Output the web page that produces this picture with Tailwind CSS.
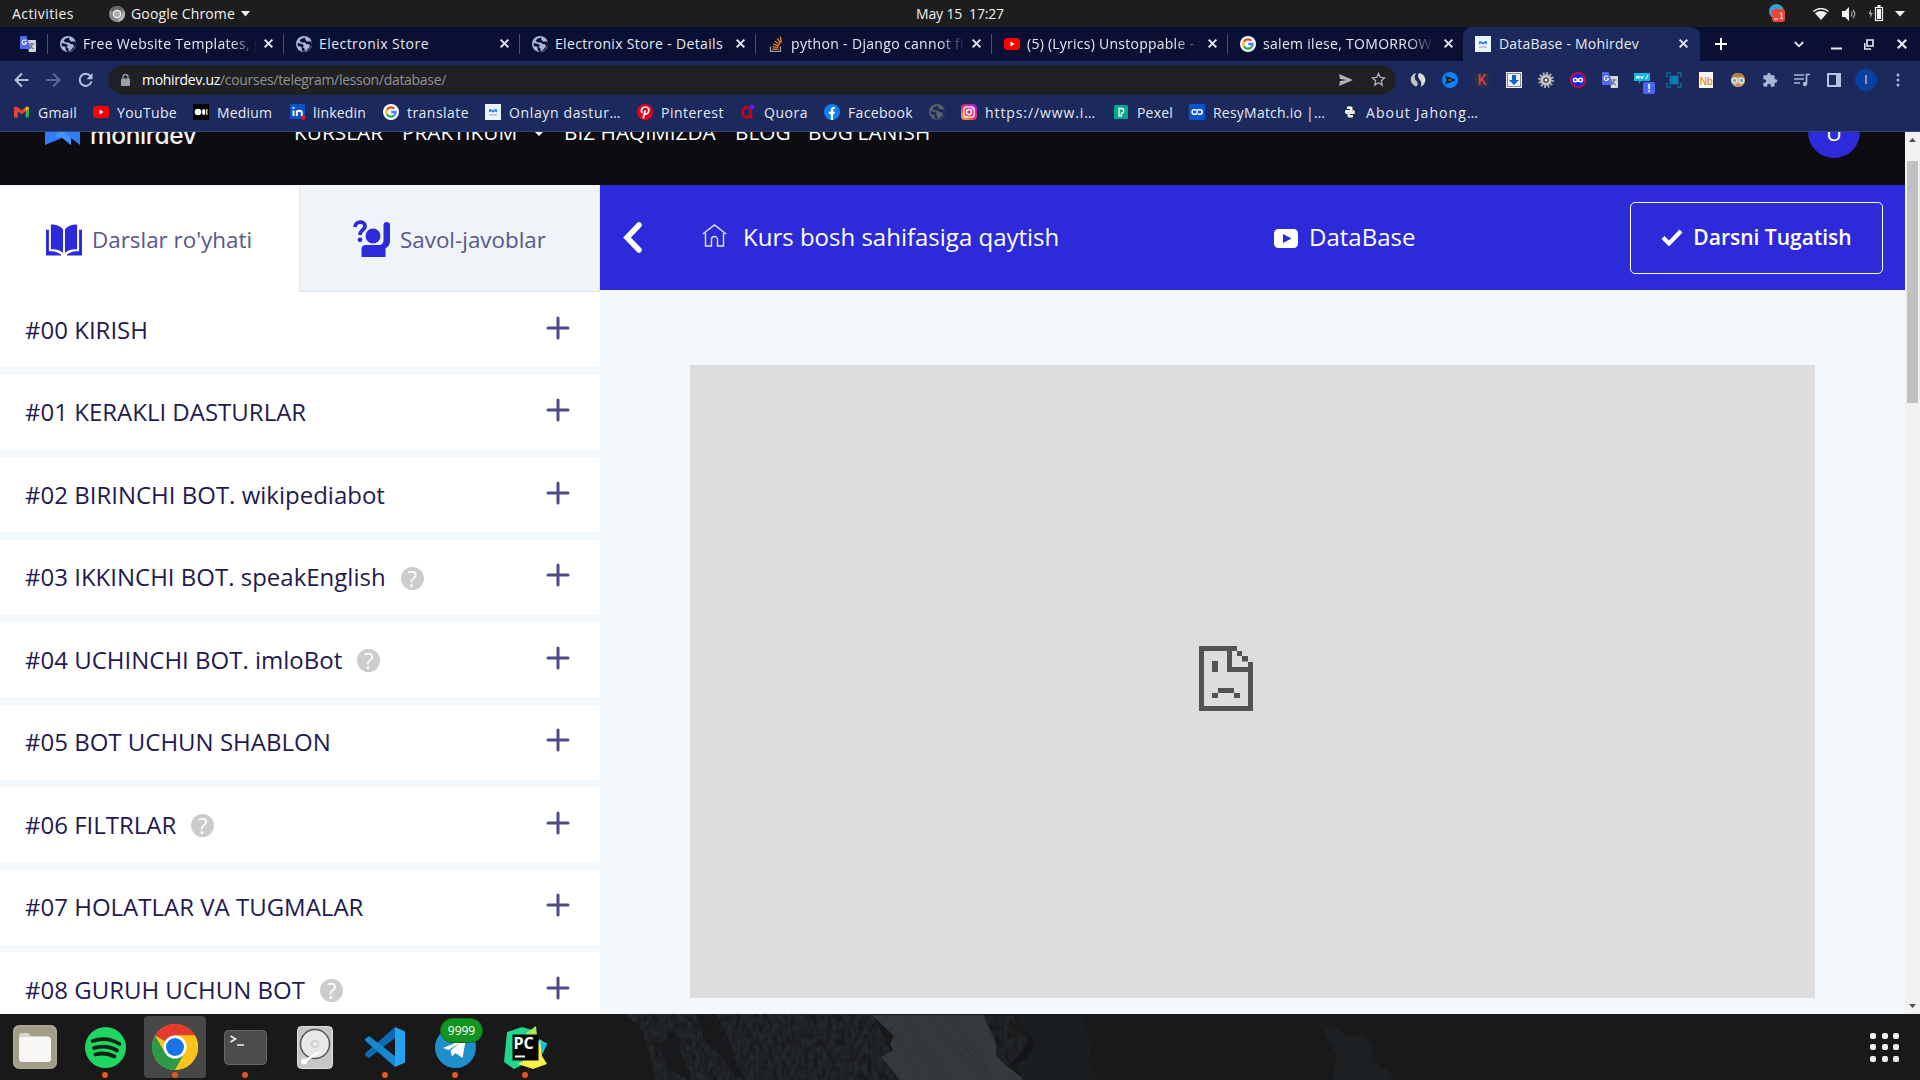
<!DOCTYPE html>
<html lang="uz">
<head>
<meta charset="utf-8">
<title>DataBase - Mohirdev</title>
<script src="https://cdn.jsdelivr.net/npm/@tailwindcss/browser@4"></script>
</head>
<body class="w-[1920px] h-[1080px] overflow-hidden bg-[#191919] font-['Open_Sans',sans-serif] flex flex-col">

<!-- Shared icons -->
<svg class="hidden">
  <symbol id="globe" viewBox="0 0 16 16"><circle cx="8" cy="8" r="8" fill="currentColor"/><path d="M9 1.500 5 3 3.500 5 6 6.500h3L10.500 8l3 .5.5 2-3.500 4-2 .5V12.500L6.500 11 8 9.500 6 8 1.500 7 2 10.500 4 10l2 2-.5 2L8 16l5-2 3-5-.5-3.500L11 5.500 9.500 4z" fill="var(--land,#0a1033)"/></symbol>
  <symbol id="x" viewBox="0 0 10 10"><path d="M1.500 1.500l7 7m0-7l-7 7" stroke="currentColor" stroke-width="1.800"/></symbol>
  <symbol id="yt" viewBox="0 0 16 16"><rect x="0" y="2" width="16" height="12" rx="3" fill="#f00"/><path d="M6.500 5.500v5l4-2.500z" fill="#fff"/></symbol>
  <symbol id="google" viewBox="0 0 16 16"><circle cx="8" cy="8" r="8" fill="#fff"/><g fill="none" stroke-width="2.300"><path d="M11.300 4.700A4.700 4.700 0 0 0 3.900 5.800" stroke="#ea4335"/><path d="M3.900 5.800a4.700 4.700 0 0 0 0 4.400" stroke="#fbbc05"/><path d="M3.900 10.200a4.700 4.700 0 0 0 7 1.400" stroke="#34a853"/><path d="M10.900 11.600A4.700 4.700 0 0 0 12.600 8H8.200" stroke="#4285f4"/></g></symbol>
  <symbol id="mohir" viewBox="0 0 16 16"><rect width="16" height="16" fill="#eaf4ff"/><path d="M4 8.500V6Q4 4.500 6 5.200L8 6.500l2-1.300Q12 4.500 12 6v2.500l-2-1.300-2 1.300-2-1.300z" fill="#2f7df6"/><path d="M4 11h8" stroke="#a5b0c4" stroke-width="1.300"/></symbol>
  <symbol id="gtrans" viewBox="0 0 16 16"><path d="M7 4h8a1 1 0 0 1 1 1v10a1 1 0 0 1-1 1H9z" fill="#d6d8dc"/><path d="M9.500 8h5M12 7v1.500c0 2-1 3-2 4m.5-3c.8 2 2 2.800 3.500 3.500" stroke="#5b6270" fill="none"/><path d="M1 0h5.500L11 13H1a1 1 0 0 1-1-1V1a1 1 0 0 1 1-1z" fill="#5468e8"/><path d="M6.200 5A2.200 2.200 0 1 0 6.500 6.800H4.500" stroke="#fff" fill="none" stroke-width="1.100"/></symbol>
  <symbol id="plus" viewBox="0 0 24 24"><path d="M12 2v20M2 12h20" stroke="#4b4b85" stroke-width="3" stroke-linecap="round"/></symbol>
</svg>

<!-- System bar -->
<header class="h-[27px] shrink-0 bg-[#1d1d1d] text-[#f0f0f0] text-[14px] grid grid-cols-3 items-center">
  <div class="flex items-center pl-3">
    <span class="w-[97px] tracking-[0.43px]">Activities</span>
    <svg class="size-4" viewBox="0 0 16 16"><circle cx="8" cy="8" r="8" fill="#8b8b8b"/><path d="M8 0a8 8 0 0 1 7 4H8a4 4 0 0 0-4 2L1.500 3.500A8 8 0 0 1 8 0z" fill="#666"/><path d="M15.500 5A8 8 0 0 1 8 16l4-6z" fill="#b5b5b5"/><circle cx="8" cy="8" r="3.600" fill="#aaa" stroke="#f2f2f2" stroke-width="1.200"/></svg>
    <span class="pl-[6px] tracking-[0.150px]">Google Chrome</span>
    <svg class="w-[9px] h-[6px] ml-[6px]" viewBox="0 0 9 6"><path d="M0 0h9L4.500 5.500z" fill="#f0f0f0"/></svg>
  </div>
  <div class="text-center whitespace-pre tracking-[-0.160px]">May 15  17:27</div>
  <div class="flex items-center justify-end pr-[15px]">
    <svg class="w-[17px] h-[19px] mr-[27px]" viewBox="0 0 17 19"><circle cx="7.500" cy="7.500" r="7.500" fill="#2ea3dc"/><rect x="3" y="5" width="13" height="13" rx="3" fill="#f0443a"/><path d="M5 15h4M11 14.500h3M12.700 15V9l-1.700 1" stroke="#fff" fill="none"/></svg>
    <svg class="w-4 h-3 mr-3" viewBox="0 0 16 12"><path d="M.5 3.500C5-.5 11-.5 15.500 3.500" stroke="#f2f2f2" stroke-width="1.300" fill="none"/><path d="M2 5.200c4-3 8-3 12 0L8 12z" fill="#f2f2f2"/></svg>
    <svg class="w-4 h-4 mr-[11px]" viewBox="0 0 16 16"><path d="M1 5h3l4-4v14l-4-4H1z" fill="#f2f2f2"/><path d="M10 5.500q2 2.500 0 5M12 4q3.500 4 0 8" stroke="#aaa" fill="none" stroke-width="1.200"/></svg>
    <svg class="w-4 h-[17px] mr-[11px]" viewBox="0 0 16 17"><path d="M3 4 .5 9h2L2 13l3-5H3z" fill="#aaa"/><rect x="7.500" y="2.500" width="7" height="13" fill="none" stroke="#f2f2f2" stroke-width="1.200"/><rect x="9" y="4" width="4" height="10" fill="#f2f2f2"/><rect x="9.500" y="0" width="3" height="2" fill="#f2f2f2"/></svg>
    <svg class="w-[10px] h-[6px]" viewBox="0 0 10 6"><path d="M0 0h10L5 5.500z" fill="#f2f2f2"/></svg>
  </div>
</header>

<!-- Browser tabs -->
<div class="h-[34px] shrink-0 bg-[#0a1033] flex items-center text-[14px] text-[#e6e9f2] whitespace-nowrap">
  <div class="w-[47px] pl-5"><svg class="size-4"><use href="#gtrans"/></svg></div>
  <div class="w-[236px] h-5 border-l border-[#4c526b] flex items-center pl-3 pr-[9px] pb-[1px]">
    <svg class="size-4 shrink-0 text-[#a9b6d8]"><use href="#globe"/></svg>
    <span class="ml-[7px] w-[174px] overflow-hidden tracking-[0.300px] mask-r-from-85%">Free Website Templates, p</span>
    <svg class="size-[11px] ml-auto shrink-0"><use href="#x"/></svg>
  </div>
  <div class="w-[236px] h-5 border-l border-[#4c526b] flex items-center pl-3 pr-[9px] pb-[1px]">
    <svg class="size-4 shrink-0 text-[#a9b6d8]"><use href="#globe"/></svg>
    <span class="ml-[7px] tracking-[0.450px]">Electronix Store</span>
    <svg class="size-[11px] ml-auto shrink-0"><use href="#x"/></svg>
  </div>
  <div class="w-[236px] h-5 border-l border-[#4c526b] flex items-center pl-3 pr-[9px] pb-[1px]">
    <svg class="size-4 shrink-0 text-[#a9b6d8]"><use href="#globe"/></svg>
    <span class="ml-[7px] tracking-[0.340px]">Electronix Store - Details</span>
    <svg class="size-[11px] ml-auto shrink-0"><use href="#x"/></svg>
  </div>
  <div class="w-[236px] h-5 border-l border-[#4c526b] flex items-center pl-3 pr-[9px] pb-[1px]">
    <svg class="size-4 shrink-0" viewBox="0 0 16 16"><path d="M2.500 10.500v5h10v-5" stroke="#9a9a9a" fill="none" stroke-width="1.300"/><path d="M4.500 13.200h6M4.600 10.800l6 .6M5.300 8.200l5.800 1.600M6.800 5.300l5 3.200M9.200 2.500l3.600 4.800M12.300.5l1 6" stroke="#f48024" stroke-width="1.300"/></svg>
    <span class="ml-[7px] w-[174px] overflow-hidden tracking-[0.330px] mask-r-from-85%">python - Django cannot fi</span>
    <svg class="size-[11px] ml-auto shrink-0"><use href="#x"/></svg>
  </div>
  <div class="w-[236px] h-5 border-l border-[#4c526b] flex items-center pl-3 pr-[9px] pb-[1px]">
    <svg class="size-4 shrink-0"><use href="#yt"/></svg>
    <span class="ml-[7px] w-[174px] overflow-hidden tracking-[0.250px] mask-r-from-85%">(5) (Lyrics) Unstoppable - S</span>
    <svg class="size-[11px] ml-auto shrink-0"><use href="#x"/></svg>
  </div>
  <div class="w-[236px] h-5 border-l border-[#4c526b] flex items-center pl-3 pr-[9px] pb-[1px]">
    <svg class="size-4 shrink-0"><use href="#google"/></svg>
    <span class="ml-[7px] w-[171px] overflow-hidden tracking-[0.300px] mask-r-from-85%">salem ilese, TOMORROW</span>
    <svg class="size-[11px] ml-auto shrink-0"><use href="#x"/></svg>
  </div>
  <div class="w-[237px] h-full rounded-t-[9px] bg-[#1b295c] flex items-center pl-3 pr-[11px] pb-[1px]">
    <svg class="size-4 shrink-0"><use href="#mohir"/></svg>
    <span class="ml-2 tracking-[0.200px]">DataBase - Mohirdev</span>
    <svg class="size-[11px] ml-auto shrink-0"><use href="#x"/></svg>
  </div>
  <svg class="size-3 ml-[15px] shrink-0" viewBox="0 0 12 12"><path d="M6 0v12M0 6h12" stroke="#fff" stroke-width="2"/></svg>
  <svg class="w-[10px] h-[7px] ml-[67px] shrink-0" viewBox="0 0 10 7"><path d="M.8 1 5 5.300 9.200 1" stroke="#e6e9f2" stroke-width="1.800" fill="none"/></svg>
  <svg class="w-[11px] h-3 ml-[27px] shrink-0" viewBox="0 0 11 12"><path d="M0 10.500h11" stroke="#e6e9f2" stroke-width="2"/></svg>
  <svg class="w-[10px] h-[11px] ml-[22px] shrink-0" viewBox="0 0 10 11"><path d="M3 1h6v6H3zM.7 4v6H7" stroke="#e6e9f2" stroke-width="1.600" fill="none"/></svg>
  <svg class="size-[12px] ml-[22px] shrink-0"><use href="#x"/></svg>
</div>

<!-- Address bar -->
<div class="h-[37px] shrink-0 bg-[#1b295c] flex items-center text-[#a9b6d8]">
  <svg class="w-[15px] h-4 ml-[14px]" viewBox="0 0 15 16"><path d="M14.500 8H1.500M8 1.500 1.500 8 8 14.500" stroke="#b4bfe0" stroke-width="2" fill="none"/></svg>
  <svg class="w-[15px] h-4 ml-[17px]" viewBox="0 0 15 16"><path d="M.5 8h13M7 1.500 13.500 8 7 14.500" stroke="#5a6894" stroke-width="2" fill="none"/></svg>
  <svg class="w-[15px] h-4 ml-[17px]" viewBox="0 0 15 16"><path d="M12.500 4.200A6 6 0 1 0 13.500 9.500" stroke="#b4bfe0" stroke-width="2" fill="none"/><path d="M14.500 1v6.200H8.500z" fill="#b4bfe0"/></svg>
  <div class="ml-[15px] w-[1288px] h-[30px] rounded-full bg-[#202124] flex items-center pl-[13px] pr-[10px] text-[14px] text-[#8f9296]">
    <svg class="w-[9px] h-3" viewBox="0 0 9 12"><rect y="4.500" width="9" height="7.500" rx="1" fill="#9aa0a6"/><path d="M2 5V3a2.500 2.500 0 0 1 5 0v2" stroke="#9aa0a6" stroke-width="1.400" fill="none"/></svg>
    <span class="ml-[12px] text-white tracking-[-0.320px]">mohirdev.uz</span><span class="tracking-[-0.300px]">/courses/telegram/lesson/database/</span>
    <svg class="w-[14px] h-3 ml-auto" viewBox="0 0 14 12"><path d="M0 0l14 6-14 6 1-5 7-1-7-1z" fill="#b0b3b8"/></svg>
    <svg class="size-[15px] ml-[18px]" viewBox="0 0 15 15"><path d="M7.500 1.500l1.800 4 4.300.4-3.300 2.900 1 4.300-3.800-2.300-3.800 2.300 1-4.300L1.400 5.900l4.300-.4z" stroke="#b0b3b8" stroke-width="1.300" fill="none"/></svg>
  </div>
  <div class="ml-[14px] flex items-center gap-4">
    <svg class="size-4" viewBox="0 0 16 16"><path d="M6.500 1C3 1.500.5 4.500.8 8c.3 3 2.500 5.500 5.200 6.500C8.500 13 8 10.500 6 8.500S4.500 3 6.500 1z" fill="#c4c4c4"/><path d="M9 1c4 .7 6.300 3.500 6.300 7 0 3.300-2 5.800-4.800 6.700 1.500-2.500 1-5-.8-7S7.500 3 9 1z" fill="#ddd"/></svg>
    <svg class="size-4" viewBox="0 0 16 16"><circle cx="8" cy="8" r="8" fill="#0a84ff"/><path d="M3 3.500 14 8 3 12.500l1.500-4.500z" fill="#10141f"/><path d="M6 8h4" stroke="#8b97a8"/></svg>
    <span class="size-4 rounded-full bg-[#28334a] text-[#e23c4a] text-[14px] leading-4 text-center font-['Roboto',sans-serif] font-medium">K</span>
    <svg class="size-4" viewBox="0 0 16 16"><rect width="16" height="16" fill="#eef1f4"/><rect x="1.500" y="1.500" width="13" height="13" fill="none" stroke="#888"/><path d="M6 3h4v5h3l-5 5-5-5h3z" fill="#0b67c2"/></svg>
    <svg class="size-4" viewBox="0 0 16 16"><circle cx="8" cy="8" r="6.800" fill="none" stroke="#aaa" stroke-width="2.400" stroke-dasharray="2 1.560"/><circle cx="8" cy="8" r="4.200" fill="none" stroke="#c4c4c4" stroke-width="3.200"/><circle cx="8" cy="8" r="2.600" fill="#555"/><circle cx="8" cy="8" r="1.200" fill="#fff"/></svg>
    <svg class="size-4" viewBox="0 0 16 16"><circle cx="8" cy="8" r="7.300" fill="#1d22e8" stroke="#f00820" stroke-width="1.400"/><path d="M8 8C6.500 6 3.500 5.500 3.500 8s3 2 4.500 0 4.500-2.500 4.500 0-3 2-4.500 0z" fill="none" stroke="#fff" stroke-width="1.500"/></svg>
    <svg class="size-4"><use href="#gtrans"/></svg>
    <span class="relative w-4 h-4 flex"><svg class="w-4 h-3" viewBox="0 0 16 12"><path d="M0 1h16v8H7l-2 3V9H0z" fill="#14b8d8"/><path d="M2 7l1-3 1 2 1-2v3M7 4v2h2V4M12 7l2-4" stroke="#fff" fill="none"/></svg><span class="absolute left-[9px] top-[10px] w-3 h-3 rounded-xs bg-[#4d63f5] text-white text-[10px] leading-3 font-bold text-center">!</span></span>
    <svg class="size-4" viewBox="0 0 16 16"><rect x="3.500" y="3.500" width="9" height="9" fill="#0a7cab"/><path d="M1 5V1h4M11 1h4v4M15 11v4h-4M5 15H1v-4" fill="none" stroke="#0b7095" stroke-width="1.500"/></svg>
    <span class="w-[14px] mx-px h-4 bg-[#f7f7f5] text-[#f19020] text-[10px] leading-[18px] tracking-tighter text-center font-semibold">Nb</span>
    <svg class="size-4" viewBox="0 0 16 16"><circle cx="8" cy="8" r="7" fill="#e0ac7c"/><path d="M1.500 7C1.500 2 5 1 8 1s6.500 1 6.500 6l-2-2h-9z" fill="#b07f48"/><circle cx="4.500" cy="8.500" r="2.300" fill="#6fa9b0" stroke="#dfe8e8" stroke-width="1.300"/><circle cx="11.500" cy="8.500" r="2.300" fill="#6fa9b0" stroke="#dfe8e8" stroke-width="1.300"/><path d="M6 13h4" stroke="#a4603c"/></svg>
    <svg class="size-4" viewBox="0 0 24 24"><path d="M20.500 11H19V7a2 2 0 0 0-2-2h-4V3.500a2.500 2.500 0 0 0-5 0V5H4a2 2 0 0 0-2 2v3.800h1.500a2.700 2.700 0 0 1 0 5.400H2V20a2 2 0 0 0 2 2h3.800v-1.500a2.700 2.700 0 0 1 5.400 0V22H17a2 2 0 0 0 2-2v-4h1.500a2.500 2.500 0 0 0 0-5z" fill="#a9b6d8"/></svg>
    <svg class="size-4" viewBox="0 0 16 16"><path d="M0 3h10M0 7h10M0 11h6M12.500 12V2.500H16" stroke="#a9b6d8" stroke-width="1.700" fill="none"/><circle cx="11" cy="12" r="2.200" fill="#a9b6d8"/></svg>
    <svg class="w-[14px] h-[14px] mx-px" viewBox="0 0 14 14"><path d="M1 1h12v12H1z" stroke="#b9c3e0" stroke-width="2" fill="none"/><path d="M9 0h5v14H9z" fill="#b9c3e0"/></svg>
    <span class="size-[22px] -ml-[3px] -mr-[3px] rounded-full bg-[#0842a0] text-[#d5ddf2] text-[12px] leading-[22px] text-center">I</span>
    <svg class="w-4 h-[14px]" viewBox="0 0 16 14"><g fill="#a9b6d8"><circle cx="8" cy="2" r="1.500"/><circle cx="8" cy="7" r="1.500"/><circle cx="8" cy="12" r="1.500"/></g></svg>
  </div>
</div>

<!-- Bookmarks -->
<div class="h-[34px] shrink-0 bg-[#1b295c] border-b border-[#34497b] flex items-center pl-[14px] pb-[5px] text-[14px] text-[#e6e9f2] whitespace-nowrap">
  <div class="w-[79px] flex items-center gap-2"><svg class="size-4" viewBox="0 0 16 16"><path d="M0 4.500V12q0 1.500 1.500 1.500h2V7z" fill="#4285f4"/><path d="M11.500 13.500h2q1.500 0 1.500-1.500V4.500L11.500 7z" fill="#34a853"/><path d="M0 4.500Q.5 1.500 3.500 3.200l4 3.100 4-3.100v4L7.500 10.300l-4-3.100v6.300H1.500Q0 13.500 0 12z" fill="#ea4335"/><path d="M11.500 3.200Q14.500 1.500 15 4.500v.5l-3.500 2.400z" fill="#fbbc04"/></svg><span class="tracking-[0.200px]">Gmail</span></div>
  <div class="w-[100px] flex items-center gap-2"><svg class="size-4"><use href="#yt"/></svg><span class="tracking-[0.350px]">YouTube</span></div>
  <div class="w-[97px] flex items-center gap-2"><svg class="size-4" viewBox="0 0 16 16"><rect width="16" height="16" fill="#000"/><circle cx="5" cy="8" r="3.300" fill="#fff"/><ellipse cx="10.700" cy="8" rx="1.600" ry="3" fill="#fff"/><path d="M13.800 5v6" stroke="#fff" stroke-width="1.200"/></svg><span class="tracking-[0.150px]">Medium</span></div>
  <div class="w-[93px] flex items-center gap-[7px]"><svg class="size-4" viewBox="0 0 16 16"><rect width="15" height="15" fill="#0a52c8"/><path d="M3.500 6.500V12M3.500 3v1.700M6.800 12V6.500M6.800 9c0-3 5-3 5 0v3" stroke="#fff" stroke-width="1.900" fill="none"/><circle cx="13.500" cy="13.500" r="2.200" fill="#f01020"/></svg><span class="tracking-[0.180px]">linkedin</span></div>
  <div class="w-[102px] flex items-center gap-2"><svg class="size-4"><use href="#google"/></svg><span class="tracking-[0.450px]">translate</span></div>
  <div class="w-[152px] flex items-center gap-2"><svg class="size-4"><use href="#mohir"/></svg><span class="tracking-[0.630px]">Onlayn dastur…</span></div>
  <div class="w-[103px] flex items-center gap-2"><svg class="size-4" viewBox="0 0 16 16"><circle cx="8" cy="8" r="8" fill="#e60019"/><path d="M6.200 14.500 8.200 6.500M5.200 9C3 5 6 3 8.400 3c3 0 4 2.500 3.200 4.800-.8 2.600-3.400 2.800-4 1.200" stroke="#fff" stroke-width="1.700" fill="none"/></svg><span class="tracking-[0.480px]">Pinterest</span></div>
  <div class="w-[84px] flex items-center gap-2"><svg class="size-4" viewBox="0 0 16 16"><path d="M10 4.500a4.500 5 0 1 0 .5 7M10.500 5v7l2 2" stroke="#d0021b" stroke-width="2.600" fill="none"/><circle cx="12" cy="3" r="2.500" fill="#5a20d8"/></svg><span class="tracking-[0.520px]">Quora</span></div>
  <div class="w-[105px] flex items-center gap-2"><svg class="size-4" viewBox="0 0 16 16"><circle cx="8" cy="8" r="8" fill="#0f80f5"/><path d="M6.800 16v-6H4.800V7.700h2V6c0-2.300 1.500-3.300 4-2.900v2c-1.300-.1-1.700.3-1.700 1.200v1.400h1.800l-.4 2.300H9.100v6z" fill="#fff"/></svg><span class="tracking-[0.330px]">Facebook</span></div>
  <div class="w-[32px] text-[#5c6068] [--land:#1b295c]"><svg class="size-4"><use href="#globe"/></svg></div>
  <div class="w-[152px] flex items-center gap-2"><svg class="size-4" viewBox="0 0 16 16"><defs><linearGradient id="ig" x1="0" y1="1" x2=".8" y2="0"><stop offset="0" stop-color="#ffc83d"/><stop offset=".45" stop-color="#f8324e"/><stop offset="1" stop-color="#a020d8"/></linearGradient></defs><rect width="16" height="16" rx="4" fill="url(#ig)"/><rect x="2.800" y="2.800" width="10.400" height="10.400" rx="3" stroke="#fff" stroke-width="1.300" fill="none"/><circle cx="8" cy="8" r="2.500" stroke="#fff" stroke-width="1.300" fill="none"/><circle cx="11" cy="5" r=".8" fill="#fff"/></svg><span class="tracking-[0.900px]">https://www.i…</span></div>
  <div class="w-[76px] flex items-center gap-2"><svg class="size-4" viewBox="0 0 16 16"><rect x="1" y="1" width="14" height="14" rx="1.500" fill="#07a88b"/><path d="M6 12V4.500h2.500a2.300 2.300 0 0 1 0 4.600v2.700z" stroke="#fff" stroke-width="1.300" fill="none"/></svg><span class="tracking-[0.200px]">Pexel</span></div>
  <div class="w-[153px] flex items-center gap-2"><svg class="size-4" viewBox="0 0 16 16"><rect width="16" height="16" fill="#0b53d0"/><path d="M7.500 5.800H5.300a2.200 2.200 0 0 0 0 4.400H6.500Q8 10.200 8 8t1.500-2.200H11a2.200 2.200 0 0 1 0 4.400H8.800" stroke="#fff" stroke-width="1.500" fill="none"/></svg><span class="tracking-[0.220px]">ResyMatch.io |…</span></div>
  <div class="flex items-center gap-2"><svg class="size-4" viewBox="0 0 16 16"><circle cx="8" cy="8" r="7.500" fill="#123047"/><path d="M5 2.800Q8 1.800 10.500 3v3.500Q10.500 8 9 8H7Q5.500 8 5.500 10H4Q2 8 3.500 6H8V5H5z" fill="#fff"/><path d="M11 13.200Q8 14.200 5.500 13V9.500Q5.500 8 7 8h2q1.500 0 1.500-2H12q2 2 .5 4H8v1h3z" fill="#e3e6ea"/></svg><span class="tracking-[1.100px]">About Jahong…</span></div>
</div>

<!-- Page -->
<div class="h-[882px] shrink-0 flex overflow-hidden">
  <div class="w-[1905px] flex flex-col bg-[#f2f8fb]">
    <nav class="h-[53px] shrink-0 overflow-hidden bg-[#0d0c11] text-white">
      <div class="h-[106px] -mt-[53px] flex items-center text-[20.800px] leading-none pl-[45px] pr-[45px]">
        <svg class="w-[35px] h-[26px]" viewBox="0 0 35 26"><path d="M0 26V0l9 7 8.500-6L26 7l9-7v26l-9-7v7l-9-7v0z" fill="#2f7df6"/><path d="M17 10l9 9v7l-9-8-8 0z" fill="#4a90ff"/></svg>
        <span class="ml-[10px] w-[204px] text-[24.500px] font-medium font-['Inter',sans-serif] tracking-[-0.400px] pt-[7px] text-[#f2f2f2]">mohirdev</span>
        <span class="w-[108px]">KURSLAR</span>
        <span class="w-[132px]">PRAKTIKUM</span>
        <svg class="w-[10px] h-[5px] mr-[20px] mt-[3px]" viewBox="0 0 10 5"><path d="M0 0h10L5 5z" fill="#fff"/></svg>
        <span class="w-[171px]">BIZ HAQIMIZDA</span>
        <span class="w-[73px]">BLOG</span>
        <span class="tracking-[0.080px]">BOG'LANISH</span>
        <span class="ml-auto size-[52px] rounded-full bg-[#2d2ad9] leading-[52px] text-center text-[22px]">U</span>
      </div>
    </nav>
    <div class="flex-1 flex min-h-0">
      <aside class="w-[600px] h-full overflow-hidden flex flex-col text-[#1f1a4f]">
        <div class="h-[107px] shrink-0 flex text-[22.400px] text-[#57578c] border-t-2 border-[#f2f8fb]">
          <div class="w-[299px] bg-white flex items-center pl-[46px]">
            <svg class="w-[36px] h-[32px]" viewBox="0 0 37 32"><path d="M5 0c6 0 10 2 12.500 5v24C14 26 9 25.500 5 25.500zM32 0c-6 0-10 2-12.500 5v24c3.500-3 8.500-3.500 12.500-3.500zM0 5.500h3V27.500c5 0 9 .5 12.500 3.500v1H0zM37 5.500h-3V27.500c-5 0-9 .5-12.500 3.500v1H37z" fill="#2d2ad9"/></svg>
            <span class="ml-[10px]">Darslar ro'yhati</span>
          </div>
          <div class="flex-1 bg-[#eff4f8] border-l border-b border-r border-[#dde7ea] flex items-center pl-[53px] pt-[1px]">
            <svg class="w-[37px] h-[37px] -mt-[2px]" viewBox="0 0 37 37"><circle cx="20" cy="16" r="7.500" fill="#2d2ad9"/><path d="M2 7C2 .5 12.500.5 12 6.500 11.700 10 7 10 7 15" fill="none" stroke="#2d2ad9" stroke-width="3.800"/><circle cx="7" cy="19.800" r="2.400" fill="#2d2ad9"/><path d="M8.500 37V29q0-4 4.500-4h13q4.500 0 4.500-5V5q0-3 3.200-3T37 5v16q0 5-4.500 7.500V37z" fill="#2d2ad9"/></svg>
            <span class="ml-[10px]">Savol-javoblar</span>
          </div>
        </div>
        <div class="flex flex-col gap-[7.500px] text-[24px]">
          <div class="h-[75px] shrink-0 bg-white flex items-center pl-[25px] pr-[30px] pt-px"><span>#00 KIRISH</span><svg class="size-[24px] ml-auto -mt-1"><use href="#plus"/></svg></div>
          <div class="h-[75px] shrink-0 bg-white flex items-center pl-[25px] pr-[30px]"><span>#01 KERAKLI DASTURLAR</span><svg class="size-[24px] ml-auto -mt-1"><use href="#plus"/></svg></div>
          <div class="h-[75px] shrink-0 bg-white flex items-center pl-[25px] pr-[30px]"><span>#02 BIRINCHI BOT. wikipediabot</span><svg class="size-[24px] ml-auto -mt-1"><use href="#plus"/></svg></div>
          <div class="h-[75px] shrink-0 bg-white flex items-center pl-[25px] pr-[30px]"><span>#03 IKKINCHI BOT. speakEnglish</span><span class="ml-[15px] mt-[2px] size-[23px] rounded-full bg-[#ccc] text-white text-[22px] leading-[22px] text-center">?</span><svg class="size-[24px] ml-auto -mt-1"><use href="#plus"/></svg></div>
          <div class="h-[75px] shrink-0 bg-white flex items-center pl-[25px] pr-[30px]"><span>#04 UCHINCHI BOT. imloBot</span><span class="ml-[15px] mt-[2px] size-[23px] rounded-full bg-[#ccc] text-white text-[22px] leading-[22px] text-center">?</span><svg class="size-[24px] ml-auto -mt-1"><use href="#plus"/></svg></div>
          <div class="h-[75px] shrink-0 bg-white flex items-center pl-[25px] pr-[30px]"><span>#05 BOT UCHUN SHABLON</span><svg class="size-[24px] ml-auto -mt-1"><use href="#plus"/></svg></div>
          <div class="h-[75px] shrink-0 bg-white flex items-center pl-[25px] pr-[30px]"><span>#06 FILTRLAR</span><span class="ml-[15px] mt-[2px] size-[23px] rounded-full bg-[#ccc] text-white text-[22px] leading-[22px] text-center">?</span><svg class="size-[24px] ml-auto -mt-1"><use href="#plus"/></svg></div>
          <div class="h-[75px] shrink-0 bg-white flex items-center pl-[25px] pr-[30px]"><span>#07 HOLATLAR VA TUGMALAR</span><svg class="size-[24px] ml-auto -mt-1"><use href="#plus"/></svg></div>
          <div class="h-[75px] shrink-0 bg-white flex items-center pl-[25px] pr-[30px]"><span>#08 GURUH UCHUN BOT</span><span class="ml-[15px] mt-[2px] size-[23px] rounded-full bg-[#ccc] text-white text-[22px] leading-[22px] text-center">?</span><svg class="size-[24px] ml-auto -mt-1"><use href="#plus"/></svg></div>
        </div>
      </aside>
      <main class="flex-1 flex flex-col">
        <div class="h-[105px] shrink-0 bg-[#2d2ad9] text-white text-[24px] flex items-center pl-[23px] pr-[22px]">
          <svg class="w-[19px] h-[31px]" viewBox="0 0 19 31"><path d="M16 3 4 15.500 16 28" stroke="#fff" stroke-width="5.500" fill="none" stroke-linecap="round"/></svg>
          <svg class="w-[25px] h-[23px] ml-[60px] -mt-1" viewBox="0 0 25 23"><path d="M.8 10 12.500 1 24.200 10M3.500 9v13h6v-6.500a3 3 0 0 1 6 0V22h6V9" stroke="#dfe2ff" stroke-width="1.400" fill="none"/></svg>
          <span class="ml-[16px] w-[531px] -mt-[2px]">Kurs bosh sahifasiga qaytish</span>
          <svg class="w-[24px] h-[19px] mt-[2px]" viewBox="0 0 24 19"><rect width="24" height="19" rx="4.500" fill="#fff"/><path d="M9 5v9l8.500-4.500z" fill="#2d2ad9"/></svg>
          <span class="ml-[11px] -mt-[2px]">DataBase</span>
          <button class="ml-auto w-[253px] h-[72px] rounded-[5px] border border-white text-[21px] font-semibold flex items-center justify-center gap-[10px]">
            <svg class="w-[22px] h-[17px]" viewBox="0 0 22 17"><path d="M2 8.500 8 14.500 20 2" stroke="#fff" stroke-width="4.200" fill="none"/></svg>
            <span>Darsni Tugatish</span>
          </button>
        </div>
        <div class="mt-[75px] ml-[90px] w-[1125px] h-[633px] bg-[#dddddd] pl-[509px] pt-[281px]">
          <svg class="w-[54px] h-[65px]" viewBox="0 0 54 65"><g fill="#535353"><path d="M0 0H38V5H33V21H49V16H54V65H0ZM5 5V60H49V26H28V5Z" fill-rule="evenodd"/><path d="M38 5h5v5h-5zM43 10h6v5.500h-6zM13 15h6v11h-6zM19 42h16v5H19zM13 47h6v5h-6zM35 47h6v5h-6z"/></g></svg>
        </div>
      </main>
    </div>
  </div>
  <!-- Scrollbar -->
  <div class="w-[15px] bg-[#f1f1f1] flex flex-col items-center pt-[6px] pb-[6px]">
    <svg class="w-[7px] h-1" viewBox="0 0 7 4"><path d="M0 4h7L3.500 0z" fill="#505050"/></svg>
    <div class="mt-[19px] w-[11px] h-[242px] bg-[#c1c1c1]"></div>
    <svg class="w-[7px] h-1 mt-auto" viewBox="0 0 7 4"><path d="M0 0h7L3.500 4z" fill="#505050"/></svg>
  </div>
</div>

<!-- Dock -->
<footer class="relative h-[66px] shrink-0 bg-[#191919] flex items-center">
  <svg class="absolute inset-0 w-[1920px] h-[66px]" viewBox="0 0 1920 66">
    <defs><filter id="grain" x="0" y="0" width="1" height="1" color-interpolation-filters="sRGB"><feTurbulence type="fractalNoise" baseFrequency=".22 .12" numOctaves="4" seed="4"/><feColorMatrix values="0 0 0 0 .09  0 0 0 0 .09  0 0 0 0 .1  2.200 0 0 0 -.75"/><feComposite in2="SourceGraphic" operator="in" result="n"/><feMerge><feMergeNode in="SourceGraphic"/><feMergeNode in="n"/></feMerge></filter></defs>
    <path d="M624 0H872l20 40-8 8 16 18H655l-6-30-6-10 2-8z" fill="#24282b" filter="url(#grain)"/>
    <path d="M696 0l20 0 12 22 8 28 10 14h-8l-14-18-20-22zM676 18l-18 12 10 24 16 10 8 2-10-22z" fill="#171819" fill-opacity=".8"/>
    <path d="M872 1H984l6 10 8 6-2 24 12 12 16 12-4 1H900L881 43l12-7-3-6 4-8z" fill="#34393c"/>
    <path d="M905 6l45 58M930 4l48 58M890 12l30 52M950 3l40 56M916 30l22 36M962 30l30 36" stroke="#2d3235" stroke-width="1"/>
    <path d="M984 2h30l2 14 12 8 8 14q-6 14-26 14-12-2-14-22z" fill="#222527" filter="url(#grain)"/>
    <path d="M1030 22q8 16-2 24-10 8-22 5 16-6 24-29z" fill="#141516"/>
    <path d="M1016 2h66l10 28-4 18 10 18h-74l-8-14 14-12 6-10z" fill="#1b1e21"/>
    <path d="M1319 10l20 4 5 8 20-1 8 10 1 16 15 10 7 9-3 10h-61l5-36z" fill="#1c2023"/>
  </svg>
  <div class="relative flex items-center h-full pl-[4px]">
    <div class="w-[62px] mr-[8px] h-[62px] flex items-center justify-center">
      <svg class="w-[44px] h-[44px]" viewBox="0 0 44 44"><rect x=".7" y=".7" width="42.600" height="42.600" rx="5" fill="#a39c87" stroke="#c4bfae"/><path d="M6 11q0-3 3-3h6l3 3h16q3 0 3 3v5H6z" fill="#d9d6cb"/><rect x="6" y="12" width="32" height="25" rx="3" fill="#f8f7f5"/></svg>
    </div>
    <div class="relative w-[62px] mr-[8px] h-[62px] flex items-center justify-center">
      <svg class="size-[41px]" viewBox="0 0 41 41"><circle cx="20.500" cy="20.500" r="20.500" fill="#1fd760"/><path d="M7.500 14c9-3 19-2 27 3M9 21c8-2.500 16-1.500 23 2.500M10.500 27.500c7-2 13-1 19 2" stroke="#0b2214" stroke-width="3.800" stroke-linecap="round" fill="none"/></svg>
      <span class="absolute bottom-0 size-[6px] rounded-full bg-[#e95420]"></span>
    </div>
    <div class="relative w-[62px] mr-[8px] h-[62px] rounded-[4px] bg-[#464747] flex items-center justify-center">
      <svg class="size-[46px]" viewBox="0 0 46 46"><circle cx="23" cy="23" r="23" fill="#fcc31e"/><path d="M23 23 3 11.500A23 23 0 0 1 43 11.500H23z" fill="#e33b2e"/><path d="M3 11.500A23 23 0 0 0 23 46L33 28.700 23 23 13 28.700z" fill="#2d9a47"/><path d="M33 28.700 23 46A23 23 0 0 0 43 11.500H23z" fill="#fcc31e"/><circle cx="23" cy="23" r="11.500" fill="#fff"/><circle cx="23" cy="23" r="9" fill="#1a73e8"/></svg>
      <span class="absolute bottom-0 size-[6px] rounded-full bg-[#e95420]"></span>
    </div>
    <div class="relative w-[62px] mr-[8px] h-[62px] flex items-center justify-center">
      <svg class="w-[43px] h-[35px]" viewBox="0 0 43 35"><rect x=".5" y=".5" width="42" height="34" rx="4" fill="#4c4c4c" stroke="#686868"/><path d="M6.500 6l5 3-5 3M13 15h7" stroke="#eee" stroke-width="1.700" fill="none"/></svg>
      <span class="absolute bottom-0 size-[6px] rounded-full bg-[#e95420]"></span>
    </div>
    <div class="w-[62px] mr-[8px] h-[62px] flex items-center justify-center">
      <svg class="w-[36px] h-[43px]" viewBox="0 0 36 43"><rect x=".5" y=".5" width="35" height="42" rx="4" fill="#c6c6c6" stroke="#e0e0e0"/><circle cx="18" cy="18" r="14.500" fill="#e8e8e8" stroke="#585858" stroke-width="1.500"/><circle cx="18" cy="18" r="4.500" fill="#d4d4d4"/><circle cx="18" cy="18" r="1.500" fill="#fff"/><path d="M6 36 22 26" stroke="#fff" stroke-width="2.500"/><circle cx="7" cy="35.500" r="3" fill="#fff"/></svg>
    </div>
    <div class="relative w-[62px] mr-[8px] h-[62px] flex items-center justify-center">
      <svg class="size-[40px]" viewBox="0 0 40 40"><path d="M0 26.500 30 0v11L4 31 0 28z" fill="#0b6cb3"/><path d="M0 13.500 0 12 4 9 30 29v11z" fill="#1787d0"/><path d="M30 0l10 4.500v31L30 40z" fill="#24a3f2"/></svg>
      <span class="absolute bottom-0 size-[6px] rounded-full bg-[#e95420]"></span>
    </div>
    <div class="relative w-[62px] mr-[8px] h-[62px] flex items-center justify-center">
      <svg class="size-[41px]" viewBox="0 0 41 41"><circle cx="20.500" cy="20.500" r="20.500" fill="#1f8fcb"/><path d="M8 21 31 11.500 27.500 31 20.500 26 17 29.500 15.500 23.500 25 16 13.500 23z" fill="#fff"/></svg>
      <span class="absolute left-[16px] top-[2px] w-[43px] h-[25px] rounded-full bg-[#129421] border border-[#0b6e17] text-white text-[12px] leading-[23px] text-center">9999</span>
      <span class="absolute bottom-0 size-[6px] rounded-full bg-[#e95420]"></span>
    </div>
    <div class="relative w-[62px] h-[62px] flex items-center justify-center">
      <svg class="size-[43px]" viewBox="0 0 43 43"><path d="M3 6 18 1 28 4 38 24 20 38 10 43 0 36z" fill="#21d789"/><path d="M32 0l1 10-12-2zM35 13l8 5-5 10z" fill="#a5e85a"/><path d="M33 14l10 3-4 10z" fill="#07c3f2"/><path d="M36 14l2 16 5 8-14 5-15-5 10-6z" fill="#f5f04a"/><rect x="8.500" y="8.500" width="26" height="26" fill="#080808"/><path d="M11 30.500h10" stroke="#fff" stroke-width="2"/><text x="9.500" y="22.500" font-size="16" font-weight="700" fill="#fff" font-family="Open Sans, sans-serif">PC</text></svg>
      <span class="absolute bottom-0 size-[6px] rounded-full bg-[#e95420]"></span>
    </div>
  </div>
  <div class="relative ml-auto mr-[21px] grid grid-cols-3 gap-x-[5.500px] gap-y-[5.500px]">
    <i class="size-[6px] rounded-[2px] bg-[#f2f0ec]"></i><i class="size-[6px] rounded-[2px] bg-[#f2f0ec]"></i><i class="size-[6px] rounded-[2px] bg-[#f2f0ec]"></i>
    <i class="size-[6px] rounded-[2px] bg-[#f2f0ec]"></i><i class="size-[6px] rounded-[2px] bg-[#f2f0ec]"></i><i class="size-[6px] rounded-[2px] bg-[#f2f0ec]"></i>
    <i class="size-[6px] rounded-[2px] bg-[#f2f0ec]"></i><i class="size-[6px] rounded-[2px] bg-[#f2f0ec]"></i><i class="size-[6px] rounded-[2px] bg-[#f2f0ec]"></i>
  </div>
</footer>
</body>
</html>
